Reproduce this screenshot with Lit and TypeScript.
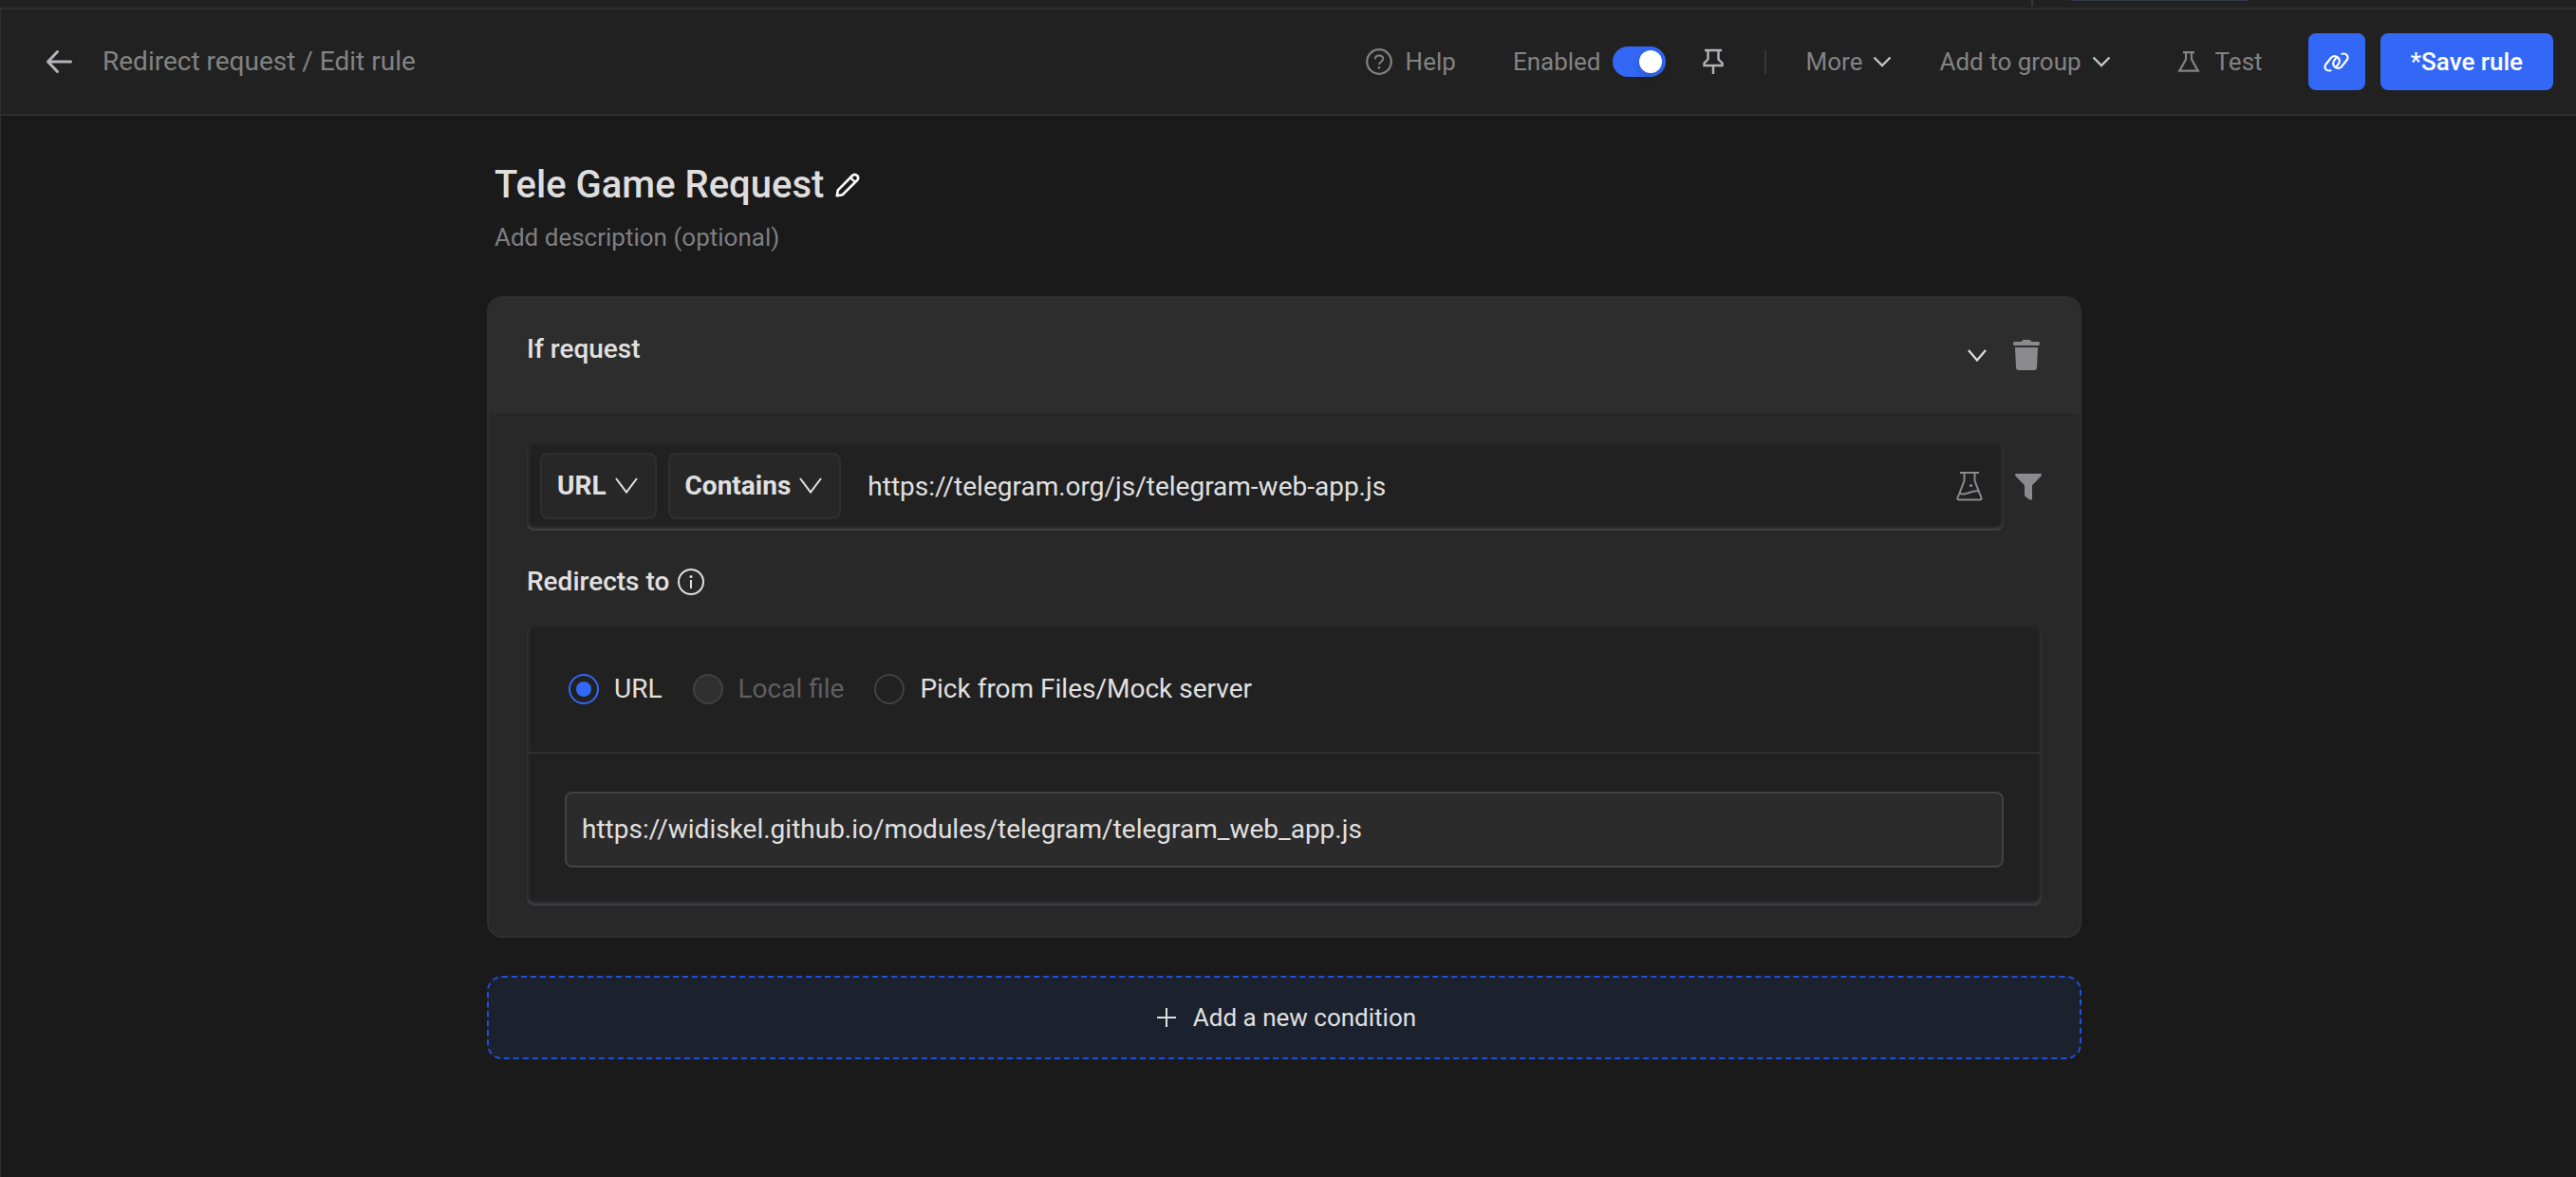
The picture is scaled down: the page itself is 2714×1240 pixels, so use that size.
import { LitElement, html, css } from "lit";
import { customElement, state } from "lit/decorators.js";

const chevron = html`<svg class="chevron" viewBox="0 0 20 12" width="20" height="12" aria-hidden="true">
  <path d="M1.5 1.5 10 10 18.5 1.5" fill="none" stroke="currentColor" stroke-width="2.4" />
</svg>`;

const thinChevron = html`<svg class="chevron" viewBox="0 0 24 18" width="24" height="18" aria-hidden="true">
  <path d="M1 1 12 15.5 23 1" fill="none" stroke="currentColor" stroke-width="2" />
</svg>`;

const targets = [
  { id: "url", label: "URL", disabled: false },
  { id: "file", label: "Local file", disabled: true },
  { id: "mock", label: "Pick from Files/Mock server", disabled: false },
];

@customElement("app-root")
export class AppRoot extends LitElement {
  static styles = css`
    :host {
      display: block;
      font-family: Roboto, "Liberation Sans", sans-serif;
      color: #e0e0e0;
      background: #1a1a1a;
      min-height: 100vh;
    }
    * {
      box-sizing: border-box;
    }
    button,
    input,
    select {
      font: inherit;
      color: inherit;
      margin: 0;
      padding: 0;
      border: 0;
      background: none;
      outline: none;
    }
    button {
      display: inline-flex;
      align-items: center;
      cursor: pointer;
    }
    svg {
      display: block;
      flex: none;
    }
    .strip {
      display: flex;
      justify-content: flex-end;
      gap: 40px;
      height: 8px;
      padding-right: 346px;
      background: #212121;
    }
    .strip-divider {
      width: 2px;
      height: 7px;
      background: #383838;
    }
    .strip-edge {
      width: 186px;
      height: 1px;
      background: #333b47;
    }
    .frame {
      border-left: 1px solid #2f2f2f;
      min-height: calc(100vh - 8px);
    }
    .bar {
      display: flex;
      align-items: center;
      justify-content: space-between;
      height: 114px;
      padding: 0 24px 0 47px;
      border-top: 2px solid #2f2f2f;
      border-bottom: 2px solid #2f2f2f;
      background: #212121;
      color: #838383;
      font-size: 26px;
      line-height: 32px;
    }
    .crumbs,
    .actions,
    .toggle,
    .field,
    .row {
      display: flex;
      align-items: center;
    }
    .crumbs {
      gap: 30px;
      font-size: 28px;
    }
    .icon-light {
      color: #b4b4b8;
    }
    .help {
      gap: 14px;
      margin-right: 60px;
    }
    .toggle {
      gap: 12px;
      margin-right: 38px;
    }
    .switch {
      appearance: none;
      display: flex;
      align-items: center;
      width: 56px;
      height: 32px;
      padding: 0 4px;
      border-radius: 16px;
      background: #4a4a4a;
    }
    .switch::before {
      content: "";
      width: 24px;
      height: 24px;
      border-radius: 50%;
      background: #fff;
      box-shadow: 0 4px 8px rgba(0, 35, 11, 0.2);
    }
    .switch:checked {
      justify-content: flex-end;
      background: #3367f6;
    }
    .divider {
      width: 2px;
      height: 26px;
      margin: 0 42px;
      background: #383838;
    }
    .menu {
      gap: 11px;
    }
    .menu .chevron {
      color: #c4c4c8;
    }
    .group {
      margin: 0 70px 0 50px;
    }
    .test {
      gap: 16px;
      margin-right: 48px;
    }
    .primary {
      justify-content: center;
      height: 60px;
      border-radius: 8px;
      background: #3367f6;
      color: #fff;
      font-weight: 500;
    }
    .link {
      width: 60px;
      margin-right: 16px;
    }
    .save {
      padding: 0 32px;
    }
    .page {
      max-width: 1680px;
      width: calc(100% - 48px);
      margin: 0 auto;
      padding-top: 51px;
    }
    .shift {
      padding-right: 9px;
    }
    .head {
      padding: 0 8px;
    }
    .title {
      display: flex;
      align-items: center;
      gap: 12px;
      margin: 0;
      font-size: 40px;
      line-height: 44px;
      font-weight: 500;
      color: #dedede;
    }
    .title svg {
      color: #fff;
    }
    .desc {
      margin: 17px 0 0;
      font-size: 26px;
      line-height: 32px;
      color: #7f7f83;
    }
    .card {
      margin-top: 46px;
      border: 2px solid #2f2f2f;
      border-radius: 16px;
      background: #282828;
      overflow: hidden;
      font-size: 28px;
      line-height: 32px;
    }
    .card-head {
      display: flex;
      justify-content: space-between;
      height: 121px;
      padding: 38px 42px 0 40px;
      background: #2d2d2d;
    }
    .card-title,
    .label {
      margin: 0;
      font-size: 28px;
      line-height: 32px;
      font-weight: 500;
    }
    .card-tools {
      display: flex;
      align-items: center;
      align-self: flex-start;
      gap: 28px;
      padding-top: 6px;
    }
    .muted {
      color: #8b8b8f;
    }
    .card-body {
      padding: 32px 40px 32px;
    }
    .row {
      gap: 12px;
    }
    .field {
      flex: 1;
      gap: 12px;
      height: 92px;
      padding: 0 22px 2px 14px;
    }
    .well {
      border-radius: 8px;
      background: #212121;
      box-shadow: inset 0 -2px 4px #4a4b50;
    }
    .pick {
      display: grid;
      grid-template-columns: 1fr 24px;
      align-items: center;
      height: 70px;
      border: 2px solid #2f2f2f;
      border-radius: 8px;
      background: #272727;
      padding-right: 18px;
      font-weight: 700;
    }
    .pick select {
      appearance: none;
      field-sizing: content;
      grid-area: 1 / 1 / 2 / 3;
      height: 66px;
      padding: 0 33px 0 16px;
      cursor: pointer;
    }
    .pick svg {
      grid-area: 1 / 2;
      pointer-events: none;
    }
    .text {
      flex: 1;
      min-width: 0;
      height: 66px;
      padding-left: 16px;
    }
    .label {
      display: flex;
      align-items: center;
      gap: 9px;
      margin: 38px 0 30px;
    }
    .targets {
      display: flex;
      align-items: center;
      gap: 32px;
      height: 135px;
      margin: 0;
      padding: 0 44px;
      border: 0;
      border-bottom: 2px solid #2f2f2f;
    }
    .target {
      display: flex;
      align-items: center;
      gap: 16px;
    }
    .target.off {
      color: #5f5f5f;
    }
    .radio {
      appearance: none;
      display: grid;
      place-items: center;
      width: 32px;
      height: 32px;
      border: 2px solid #424242;
      border-radius: 50%;
    }
    .radio:checked {
      border-color: #3367f6;
    }
    .radio:checked::before {
      content: "";
      width: 16px;
      height: 16px;
      border-radius: 50%;
      background: #3367f6;
    }
    .radio:disabled {
      background: #303030;
    }
    .dest {
      padding: 40px;
    }
    .dest input {
      display: block;
      width: 100%;
      height: 80px;
      padding: 0 16px 2px;
      border: 2px solid #424247;
      border-radius: 8px;
      background: #2b2b2b;
    }
    .add {
      justify-content: center;
      gap: 18px;
      width: 100%;
      height: 88px;
      margin-top: 40px;
      padding-left: 5px;
      border: 2px dashed #1f4fe0;
      border-radius: 16px;
      background: #1c212e;
      font-size: 26px;
      line-height: 32px;
    }
  `;

  @state() private enabled = true;
  @state() private target = "url";

  private renderBar() {
    return html`
      <header class="bar">
        <div class="crumbs">
          <button class="icon-light" aria-label="Back">
            <svg viewBox="0 0 30 26" width="30" height="26">
              <path d="M12.5 2.5 2.5 13l10 10.500M2.500 13H26.500" fill="none" stroke="currentColor" stroke-width="3" stroke-linecap="round" stroke-linejoin="round" />
            </svg>
          </button>
          <span>Redirect request / Edit rule</span>
        </div>
        <div class="actions">
          <button class="help">
            <svg viewBox="0 0 28 28" width="28" height="28" aria-hidden="true">
              <circle cx="14" cy="14" r="12.800" fill="none" stroke="currentColor" stroke-width="2.200" />
              <path d="M9.800 11.300c0-2.300 1.800-3.800 4.200-3.800s4.200 1.500 4.200 3.600c0 3-4.200 3.200-4.200 6" fill="none" stroke="currentColor" stroke-width="1.900" />
              <circle cx="14" cy="20.200" r="1.300" fill="currentColor" />
            </svg>
            <span>Help</span>
          </button>
          <label class="toggle">
            <span>Enabled</span>
            <input class="switch" type="checkbox" role="switch" .checked=${this.enabled}
              @change=${(e: Event) => (this.enabled = (e.target as HTMLInputElement).checked)} />
          </label>
          <button class="icon-light" aria-label="Pin rule">
            <svg viewBox="0 0 24 28" width="24" height="28">
              <path d="M3 2H21M6.500 2v9.500L2.500 15.500V18H21.500v-2.500L17.500 11.500V2M12 18v9" fill="none" stroke="currentColor" stroke-width="2.400" />
            </svg>
          </button>
          <span class="divider"></span>
          <button class="menu" aria-haspopup="menu">More ${chevron}</button>
          <button class="menu group" aria-haspopup="menu">Add to group ${chevron}</button>
          <button class="test">
            <svg viewBox="0 0 24 24" width="24" height="24" aria-hidden="true">
              <path d="M6 2.200H18M9 2.200V9.500L2.300 21.700H21.700L15 9.500V2.200M1 21.700H23" fill="none" stroke="currentColor" stroke-width="2.200" />
            </svg>
            <span>Test</span>
          </button>
          <button class="primary link" aria-label="Share link">
            <svg viewBox="0 0 27 21" width="27" height="21">
              <g fill="none" stroke="currentColor" stroke-width="2.200" stroke-linecap="round">
                <path d="M7.500 19.300C3 20.300 0 16.500 2.300 13L8 5.800C11.500 2.500 17 5 16.800 9.500Q16.700 11 15.700 12.300L13.800 14.800" />
                <path d="M19.500 1.700C24 .7 27 4.500 24.700 8L19 15.200C15.500 18.500 10 16 10.200 11.500Q10.300 10 11.300 8.700L13.200 6.200" />
              </g>
            </svg>
          </button>
          <button class="primary save">*Save rule</button>
        </div>
      </header>
    `;
  }

  private renderSource() {
    return html`
      <div class="row">
        <div class="field well">
          <div class="pick">
            <select aria-label="Match on"><option>URL</option></select>
            ${thinChevron}
          </div>
          <div class="pick">
            <select aria-label="Operator"><option>Contains</option></select>
            ${thinChevron}
          </div>
          <input class="text" type="text" aria-label="Request URL" value="https://telegram.org/js/telegram-web-app.js" />
          <button class="muted" aria-label="Test URL condition">
            <svg viewBox="0 0 28 32" width="28" height="32">
              <g fill="none" stroke="currentColor" stroke-width="2">
                <path d="M4 2H24M8.500 2V10.500L1.500 28.500Q1 30.500 3 30.500H25Q27 30.500 26.500 28.500L19.500 10.500V2" stroke-linejoin="round" />
                <path d="M3.500 23.500C9 27.500 15 20 24 21.500" />
              </g>
              <circle cx="15.500" cy="15.500" r="1.600" fill="currentColor" />
            </svg>
          </button>
        </div>
        <button class="muted" aria-label="Filters">
          <svg viewBox="0 0 28 28" width="28" height="28">
            <path d="M.8 0H27.200Q28.600 1 27.500 2.500L18 12.300V26.500Q17.500 28.300 15.500 27.600L11 24.200Q10 23.500 10 22V12.300L.5 2.500Q-.6 1 .8 0Z" fill="currentColor" />
          </svg>
        </button>
      </div>
    `;
  }

  private renderDestination() {
    return html`
      <h3 class="label">
        Redirects to
        <svg viewBox="0 0 28 28" width="28" height="28" aria-hidden="true">
          <circle cx="14" cy="14" r="13" fill="none" stroke="currentColor" stroke-width="2" />
          <path d="M14 12v9" stroke="currentColor" stroke-width="2" />
          <circle cx="14" cy="8.500" r="1.500" fill="currentColor" />
        </svg>
      </h3>
      <div class="well">
        <fieldset class="targets" aria-label="Redirects to">
          ${targets.map(
            (t) => html`
              <label class="target ${t.disabled ? "off" : ""}">
                <input class="radio" type="radio" name="target" ?disabled=${t.disabled}
                  .checked=${this.target === t.id} @change=${() => (this.target = t.id)} />
                <span>${t.label}</span>
              </label>
            `
          )}
        </fieldset>
        <div class="dest">
          <input type="text" aria-label="Destination URL" value="https://widiskel.github.io/modules/telegram/telegram_web_app.js" />
        </div>
      </div>
    `;
  }

  render() {
    return html`
      <div class="strip"><span class="strip-divider"></span><span class="strip-edge"></span></div>
      <div class="frame">
        ${this.renderBar()}
        <div class="shift">
          <main class="page">
            <div class="head">
              <h1 class="title">
                Tele Game Request
                <svg viewBox="0 0 26 26" width="26" height="26" aria-hidden="true">
                  <path d="M1.800 24.200 2.800 18.300 18 3Q20.500 .6 23.100 3Q25.400 5.500 23 8L7.700 23.200Z" fill="none" stroke="currentColor" stroke-width="2.600" stroke-linejoin="round" />
                  <path d="M16 5 21 10" stroke="currentColor" stroke-width="2.400" />
                </svg>
              </h1>
              <p class="desc">Add description (optional)</p>
            </div>
            <section class="card">
              <div class="card-head">
                <h2 class="card-title">If request</h2>
                <div class="card-tools">
                  <button aria-label="Collapse">
                    <svg viewBox="0 0 20 14" width="20" height="14">
                      <path d="M1 2 10 12.500 19 2" fill="none" stroke="currentColor" stroke-width="2.200" />
                    </svg>
                  </button>
                  <button class="muted" aria-label="Delete condition">
                    <svg viewBox="0 0 28 32" width="28" height="32">
                      <path d="M9 2Q9.200 0 11 0H17Q18.800 0 19 2H26.500Q28 2 28 4T26.500 6H1.500Q0 6 0 4T1.500 2Z" fill="currentColor" />
                      <path d="M2 8H26L25 29.500Q24.800 32 22.500 32H5.500Q3.200 32 3 29.500Z" fill="currentColor" />
                    </svg>
                  </button>
                </div>
              </div>
              <div class="card-body">${this.renderSource()} ${this.renderDestination()}</div>
            </section>
            <button class="add">
              <svg viewBox="0 0 20 20" width="20" height="20" aria-hidden="true">
                <path d="M10 0v20M0 10h20" stroke="currentColor" stroke-width="2" />
              </svg>
              Add a new condition
            </button>
          </main>
        </div>
      </div>
    `;
  }
}
